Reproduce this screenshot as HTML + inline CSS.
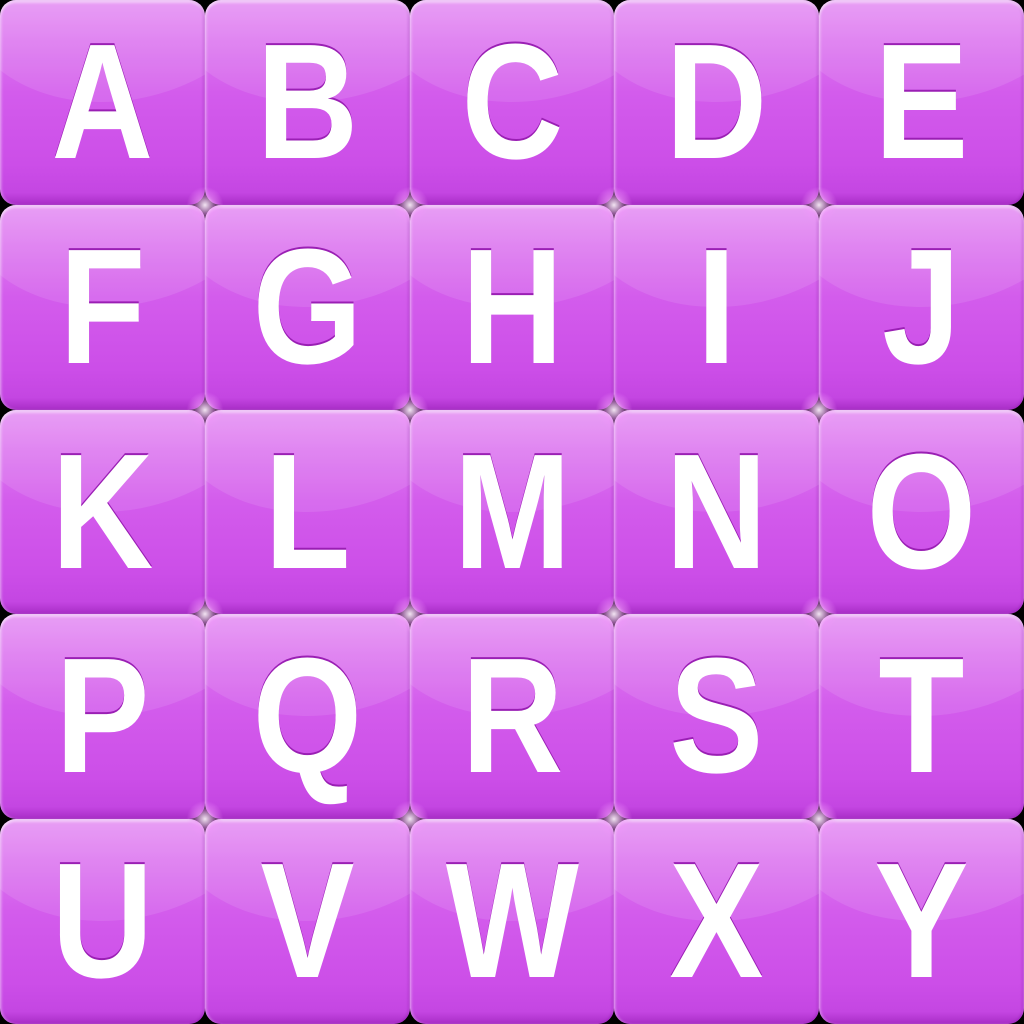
<!DOCTYPE html>
<html><head><style>
html,body{margin:0;padding:0;width:1024px;height:1024px;background:#000;overflow:hidden}
.g{position:relative;width:1024px;height:1024px}
.t{position:absolute;width:204.8px;height:204.8px;box-sizing:border-box;border-radius:16px;
background:linear-gradient(180deg,#e694f4 0%,#dd78f0 20%,#d35cec 45%,#cc4ee8 80%,#c446e2 94%,#a82cc6 100%);
box-shadow:inset 0 3px 2px rgba(255,255,255,.45),inset 2px 0 2px rgba(255,255,255,.25),inset -2px 0 2px rgba(120,0,150,.25);overflow:hidden}
.t:before{content:"";position:absolute;left:-40px;top:-140px;width:320px;height:240px;border-radius:50%;background:rgba(255,255,255,.10);transform:rotate(-12deg)}
.t span{position:absolute;left:0;right:0;top:10px;text-align:center;font:bold 164px/184px "Liberation Sans",sans-serif;color:#fff;transform:scaleX(.86);text-shadow:0 -2px 0 #9a1fb4}
.s{position:absolute;width:40px;height:40px;margin:-20px 0 0 -20px;background:radial-gradient(circle,rgba(255,240,255,.95) 0,rgba(240,150,250,.6) 30%,rgba(220,110,240,0) 65%)}
</style></head><body><div class="g" id="g">
<div class="t" style="left:0;top:0"><span>A</span></div>
<div class="t" style="left:204.8px;top:0"><span>B</span></div>
<div class="t" style="left:409.6px;top:0"><span>C</span></div>
<div class="t" style="left:614.4px;top:0"><span>D</span></div>
<div class="t" style="left:819.2px;top:0"><span>E</span></div>
<div class="t" style="left:0;top:204.8px"><span>F</span></div>
<div class="t" style="left:204.8px;top:204.8px"><span>G</span></div>
<div class="t" style="left:409.6px;top:204.8px"><span>H</span></div>
<div class="t" style="left:614.4px;top:204.8px"><span>I</span></div>
<div class="t" style="left:819.2px;top:204.8px"><span>J</span></div>
<div class="t" style="left:0;top:409.6px"><span>K</span></div>
<div class="t" style="left:204.8px;top:409.6px"><span>L</span></div>
<div class="t" style="left:409.6px;top:409.6px"><span>M</span></div>
<div class="t" style="left:614.4px;top:409.6px"><span>N</span></div>
<div class="t" style="left:819.2px;top:409.6px"><span>O</span></div>
<div class="t" style="left:0;top:614.4px"><span>P</span></div>
<div class="t" style="left:204.8px;top:614.4px"><span>Q</span></div>
<div class="t" style="left:409.6px;top:614.4px"><span>R</span></div>
<div class="t" style="left:614.4px;top:614.4px"><span>S</span></div>
<div class="t" style="left:819.2px;top:614.4px"><span>T</span></div>
<div class="t" style="left:0;top:819.2px"><span>U</span></div>
<div class="t" style="left:204.8px;top:819.2px"><span>V</span></div>
<div class="t" style="left:409.6px;top:819.2px"><span>W</span></div>
<div class="t" style="left:614.4px;top:819.2px"><span>X</span></div>
<div class="t" style="left:819.2px;top:819.2px"><span>Y</span></div>
<div class="s" style="left:204.8px;top:204.8px"></div><div class="s" style="left:409.6px;top:204.8px"></div><div class="s" style="left:614.4px;top:204.8px"></div><div class="s" style="left:819.2px;top:204.8px"></div>
<div class="s" style="left:204.8px;top:409.6px"></div><div class="s" style="left:409.6px;top:409.6px"></div><div class="s" style="left:614.4px;top:409.6px"></div><div class="s" style="left:819.2px;top:409.6px"></div>
<div class="s" style="left:204.8px;top:614.4px"></div><div class="s" style="left:409.6px;top:614.4px"></div><div class="s" style="left:614.4px;top:614.4px"></div><div class="s" style="left:819.2px;top:614.4px"></div>
<div class="s" style="left:204.8px;top:819.2px"></div><div class="s" style="left:409.6px;top:819.2px"></div><div class="s" style="left:614.4px;top:819.2px"></div><div class="s" style="left:819.2px;top:819.2px"></div>
</div></body></html>
